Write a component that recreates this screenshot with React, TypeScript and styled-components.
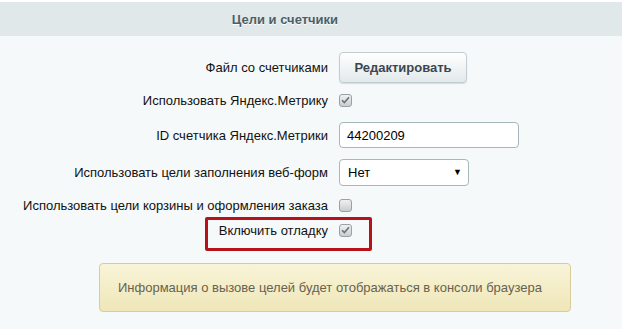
import React from "react";
import styled, { createGlobalStyle } from "styled-components";

const Global = createGlobalStyle`
  html, body { margin: 0; padding: 0; background: #f5f9f9; }
  body { font-family: "Liberation Sans", Arial, sans-serif; font-size: 13px; color: #000; }
  #root { width: 622px; height: 329px; overflow: hidden; }
`;

const Page = styled.div`
  position: relative;
  width: 622px;
  height: 329px;
  padding-top: 2px;
  box-sizing: border-box;
  background: #f5f9f9;
`;

const TopStrip = styled.div`
  position: absolute;
  left: 0; top: 0; right: 0; height: 2px;
  background: #ffffff;
`;

const Header = styled.div`
  height: 34px;
  background: #e0e8e9;
  display: flex;
  align-items: center;
  justify-content: center;
  padding-right: 52px;
  font-weight: bold;
  font-size: 13px;
  color: #4b6066;
  text-shadow: 0 1px #ffffff;
`;

const Form = styled.div`
  display: grid;
  grid-template-columns: 328px 1fr;
  column-gap: 11px;
  padding-top: 15px;
`;

const Label = styled.div<{ $h: number }>`
  height: ${(p) => p.$h}px;
  display: flex;
  align-items: center;
  justify-content: flex-end;
  color: #111;
  white-space: nowrap;
`;

const Cell = styled.div<{ $h: number }>`
  height: ${(p) => p.$h}px;
  display: flex;
  align-items: center;
`;

const Button = styled.button`
  height: 31px;
  width: 128px;
  padding: 0 12px;
  border: 1px solid #c3ccd0;
  border-radius: 4px;
  background: linear-gradient(#ffffff, #e2e9ea);
  box-shadow: 0 1px 1px rgba(0, 0, 0, 0.12);
  font-family: "Liberation Sans", Arial, sans-serif;
  font-weight: bold;
  font-size: 13px;
  color: #3c4650;
`;

const Box = styled.span`
  width: 13px;
  height: 13px;
  box-sizing: border-box;
  border: 1px solid #9aa0a3;
  border-radius: 3px;
  background: linear-gradient(#f0f0f0, #c9cdcf);
  display: inline-flex;
  align-items: center;
  justify-content: center;
`;

const TextInput = styled.div`
  width: 180px;
  height: 26px;
  box-sizing: border-box;
  border: 1px solid #a9b6ba;
  border-radius: 4px;
  background: #fff;
  display: flex;
  align-items: center;
  padding: 0 7px;
  font-size: 13px;
  color: #000;
`;

const Select = styled.div`
  width: 130px;
  height: 27px;
  box-sizing: border-box;
  border: 1px solid #a9b6ba;
  border-radius: 4px;
  background: #fff;
  display: flex;
  align-items: center;
  justify-content: space-between;
  padding: 0 6px 0 8px;
  font-size: 13px;
  color: #000;
`;

const Arrow = styled.span`
  font-size: 9px;
  color: #000;
`;

const Highlight = styled.div`
  position: absolute;
  left: 205px;
  top: 217px;
  width: 167px;
  height: 34px;
  box-sizing: border-box;
  border: 3px solid #b5121b;
  border-radius: 2px;
  pointer-events: none;
`;

const Info = styled.div`
  margin: 22px 0 0 99px;
  width: 472px;
  height: 49px;
  box-sizing: border-box;
  border: 1px solid #d6cc9c;
  border-radius: 4px;
  background: linear-gradient(#f8f4d8, #efe6b8);
  display: flex;
  align-items: center;
  padding-left: 18px;
  color: #67624f;
  font-size: 13px;
`;

const Check = ({ checked }: { checked?: boolean }) => (
  <Box>
    {checked && (
      <svg width="9" height="8" viewBox="0 0 9 8">
        <path d="M1 4.2 L3.4 6.6 L8 1.2" fill="none" stroke="#6b7275" strokeWidth="1.6" />
      </svg>
    )}
  </Box>
);

export default function App() {
  return (
    <>
      <Global />
      <Page>
        <TopStrip />
        <Header>Цели и счетчики</Header>
        <Form>
          <Label $h={32}>Файл со счетчиками</Label>
          <Cell $h={32}><Button>Редактировать</Button></Cell>

          <Label $h={34}>Использовать Яндекс.Метрику</Label>
          <Cell $h={34}><Check checked /></Cell>

          <Label $h={36}>ID счетчика Яндекс.Метрики</Label>
          <Cell $h={36}><TextInput>44200209</TextInput></Cell>

          <Label $h={38}>Использовать цели заполнения веб-форм</Label>
          <Cell $h={38}><Select>Нет<Arrow>▼</Arrow></Select></Cell>

          <Label $h={28}>Использовать цели корзины и оформления заказа</Label>
          <Cell $h={28}><Check /></Cell>

          <Label $h={22}>Включить отладку</Label>
          <Cell $h={22}><Check checked /></Cell>
        </Form>
        <Info>Информация о вызове целей будет отображаться в консоли браузера</Info>
        <Highlight />
      </Page>
    </>
  );
}
